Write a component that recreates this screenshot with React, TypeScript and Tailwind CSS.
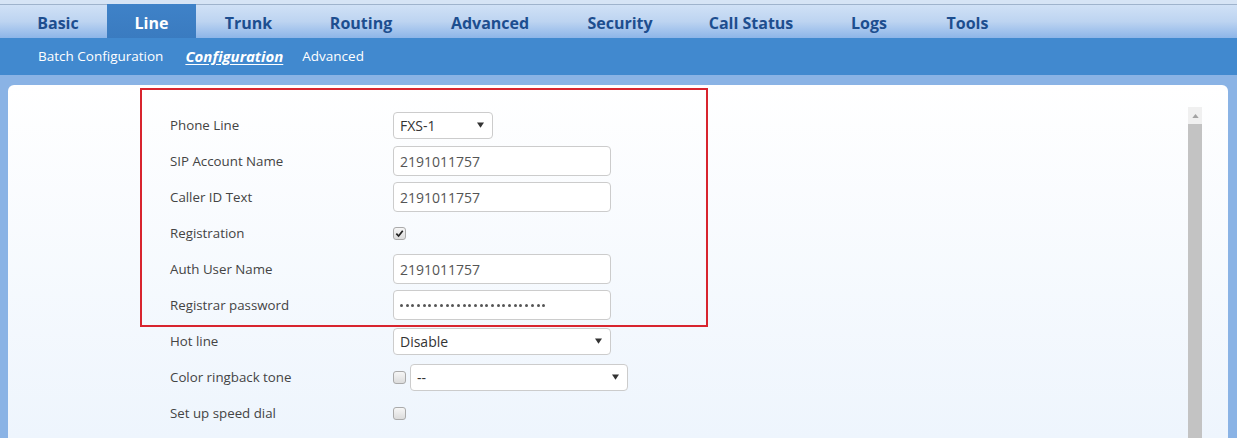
import React from 'react';

const tabs = [
  { label: 'Basic', w: 'w-[98px]' },
  { label: 'Line', w: 'w-[89px]', active: true },
  { label: 'Trunk', w: 'w-[105px]' },
  { label: 'Routing', w: 'w-[120px]' },
  { label: 'Advanced', w: 'w-[138px]' },
  { label: 'Security', w: 'w-[122px]' },
  { label: 'Call Status', w: 'w-[140px]' },
  { label: 'Logs', w: 'w-[96px]' },
  { label: 'Tools', w: 'w-[101px]' },
];

function Checkbox({ checked = false }: { checked?: boolean }) {
  return (
    <span className="inline-flex h-[13px] w-[13px] shrink-0 items-center justify-center rounded-[3px] border border-[#aaaaaa] bg-gradient-to-b from-[#f6f6f6] to-[#dcdcdc]">
      {checked && (
        <svg viewBox="0 0 10 10" className="h-[9px] w-[9px]">
          <path d="M1.5 5.2 L4 7.8 L8.6 2" fill="none" stroke="#222" strokeWidth="1.9" />
        </svg>
      )}
    </span>
  );
}

function TextInput({ value, dots = 0 }: { value?: string; dots?: number }) {
  return (
    <div className="flex h-[30px] w-[218px] items-center rounded-[4px] border border-[#cccccc] bg-white px-[6px] text-[14px] text-[#555]">
      {dots > 0 ? (
        <div className="flex gap-[2.7px]">
          {Array.from({ length: dots }).map((_, i) => (
            <span key={i} className="h-[3px] w-[3px] rounded-full bg-[#555]" />
          ))}
        </div>
      ) : (
        value
      )}
    </div>
  );
}

function Select({ value, w }: { value: string; w: string }) {
  return (
    <div className={`flex h-[27px] ${w} items-center justify-between rounded-[4px] border border-[#cccccc] bg-white pl-[6px] pr-[8px] text-[14px] text-[#333]`}>
      <span>{value}</span>
      <svg viewBox="0 0 8 6" className="h-[6px] w-[7px]">
        <path d="M0 0 H8 L4 6 Z" fill="#333" />
      </svg>
    </div>
  );
}

function Row({ label, children }: { label: string; children: React.ReactNode }) {
  return (
    <div className="flex h-[36px] items-center">
      <div className="w-[223px] pt-px text-[13.3px] text-[#444]">{label}</div>
      <div className="flex items-center gap-[4px]">{children}</div>
    </div>
  );
}

export default function App() {
  return (
    <div className="h-[438px] w-[1237px] overflow-hidden bg-[#8ab3e5] font-['Open_Sans',sans-serif]">
      <div className="h-[5px] border-b border-[#9fb3cc] bg-[#d6e4f5]" />
      <div className="flex h-[33px] bg-gradient-to-b from-[#d0e1f6] via-[#bdd4f1] to-[#8db5e8] pl-[9px]">
        {tabs.map((t) => (
          <div
            key={t.label}
            className={`${t.w} -mt-px flex items-center justify-center pt-[3px] text-[16px] font-bold ${
              t.active ? 'bg-gradient-to-b from-[#3f82c8] to-[#3a7bc0] text-white' : 'text-[#1d4e8f]'
            }`}
          >
            {t.label}
          </div>
        ))}
      </div>
      <div className="flex h-[37px] items-center bg-[#4189cf] pl-[38px] text-[13.5px] text-white">
        <span>Batch Configuration</span>
        <span className="ml-[22px] text-[15px] font-bold italic underline underline-offset-2">Configuration</span>
        <span className="ml-[19px]">Advanced</span>
      </div>
      <div className="px-[8px] pt-[10px] pr-[9px]">
        <div className="relative h-[353px] rounded-t-[6px] bg-gradient-to-b from-white to-[#eef5fd] pl-[162px] pt-[22px]">
          <Row label="Phone Line">
            <Select value="FXS-1" w="w-[100px]" />
          </Row>
          <Row label="SIP Account Name">
            <TextInput value="2191011757" />
          </Row>
          <Row label="Caller ID Text">
            <TextInput value="2191011757" />
          </Row>
          <Row label="Registration">
            <Checkbox checked />
          </Row>
          <Row label="Auth User Name">
            <TextInput value="2191011757" />
          </Row>
          <Row label="Registrar password">
            <TextInput dots={26} />
          </Row>
          <Row label="Hot line">
            <Select value="Disable" w="w-[218px]" />
          </Row>
          <Row label="Color ringback tone">
            <Checkbox />
            <Select value="--" w="w-[218px]" />
          </Row>
          <Row label="Set up speed dial">
            <Checkbox />
          </Row>

          <div className="absolute left-[132px] top-[3px] h-[239px] w-[568px] border-2 border-[#d8242e]" />

          <div className="absolute right-[26px] top-[22px] flex h-[340px] w-[14px] flex-col">
            <div className="flex h-[17px] items-center justify-center bg-[#f0f0f0]">
              <svg viewBox="0 0 8 5" className="h-[4px] w-[7px]">
                <path d="M0 5 L4 0 L8 5 Z" fill="#a3a3a3" />
              </svg>
            </div>
            <div className="flex-1 bg-[#c3c3c3]" />
          </div>
        </div>
      </div>
    </div>
  );
}
